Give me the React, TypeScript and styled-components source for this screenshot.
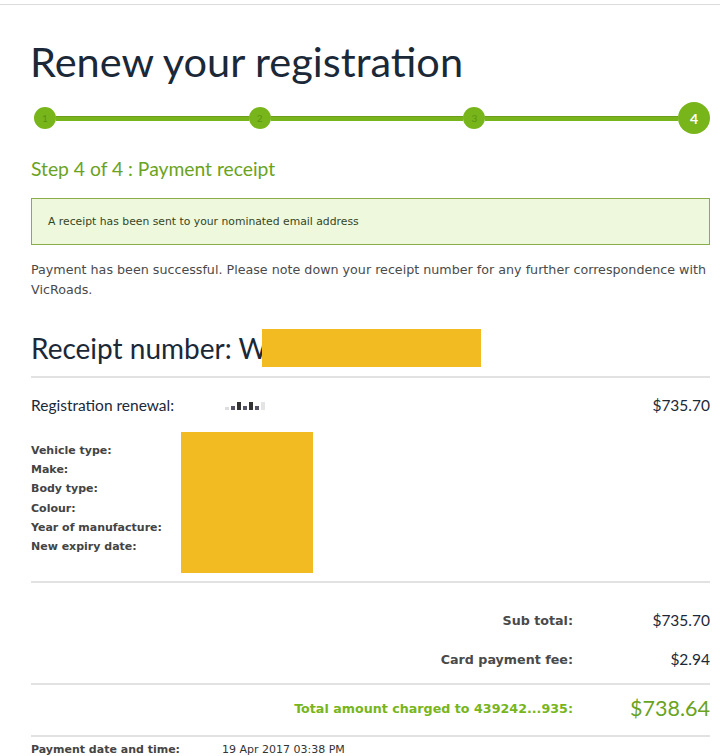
import React from "react";
import styled, { createGlobalStyle } from "styled-components";

const Global = createGlobalStyle`
  html, body { margin: 0; padding: 0; background: #fff; }
  body { font-family: "DejaVu Sans", Verdana, sans-serif; }
`;

const TopRule = styled.div`
  margin-top: 4px;
  height: 1px;
  background: #dcdcdc;
`;

const Page = styled.div`
  padding: 0 10px 0 31px;
`;

const Title = styled.h1`
  margin: 31px 0 0 -1px;
  font-family: "Lato", sans-serif;
  font-weight: 400;
  font-size: 41.5px;
  line-height: 50px;
  color: #1b2838;
`;

const Stepper = styled.div`
  display: flex;
  align-items: center;
  margin: 16px 0 0 3px;
  height: 32px;
`;

const Dot = styled.div<{ $active?: boolean }>`
  flex: none;
  width: ${(p) => (p.$active ? 32 : 22)}px;
  height: ${(p) => (p.$active ? 32 : 22)}px;
  border-radius: 50%;
  background: #78b51b;
  color: ${(p) => (p.$active ? "#fff" : "#5a9410")};
  font-family: "Lato", sans-serif;
  font-size: ${(p) => (p.$active ? 14 : 10)}px;
  font-weight: ${(p) => (p.$active ? 700 : 400)};
  display: flex;
  align-items: center;
  justify-content: center;
`;

const Connector = styled.div`
  flex: 1;
  height: 4px;
  background: #78b51b;
  border-top: 1px solid #6c9e1b;
`;

const StepHeading = styled.h2`
  margin: 23px 0 0 0;
  font-family: "Lato", sans-serif;
  font-weight: 400;
  font-size: 19.3px;
  line-height: 24px;
  color: #6aa31d;
`;

const Notice = styled.div`
  margin-top: 17px;
  height: 45px;
  border: 1px solid #88ad4a;
  background: #eef8dd;
  display: flex;
  align-items: center;
  padding-left: 16px;
  font-size: 10.8px;
  color: #34461f;
`;

const Lead = styled.p`
  margin: 15px 0 0 0;
  font-size: 12.7px;
  line-height: 20px;
  color: #4a4a4a;
`;

const ReceiptRow = styled.div`
  display: flex;
  align-items: center;
  margin-top: 29px;
  height: 38px;
`;

const ReceiptText = styled.span`
  font-family: "Lato", sans-serif;
  font-size: 28px;
  color: #1b2838;
`;

const Redact = styled.div<{ $w: number; $h: number }>`
  flex: none;
  width: ${(p) => p.$w}px;
  height: ${(p) => p.$h}px;
  background: #f2bb22;
`;

const Divider = styled.hr`
  margin: 0;
  border: none;
  border-top: 2px solid #e2e2e2;
`;

const ItemRow = styled.div`
  display: flex;
  align-items: center;
  height: 28px;
  margin-top: 13px;
  font-family: "Lato", sans-serif;
  font-size: 15.5px;
  color: #1b2838;
`;

const ItemLabel = styled.span`
  width: 194px;
`;

const Blur = styled.span`
  flex: 1;
  display: flex;
  gap: 2px;
  align-items: flex-end;
  height: 10px;
`;

const Pix = styled.span<{ $h: number; $c: string }>`
  width: 4px;
  height: ${(p) => p.$h}px;
  background: ${(p) => p.$c};
`;

const Price = styled.span<{ $big?: boolean; $green?: boolean }>`
  font-family: "Lato", sans-serif;
  font-size: ${(p) => (p.$big ? 21.5 : 15.5)}px;
  color: ${(p) => (p.$green ? "#6aa31d" : "#1b2838")};
`;

const Vehicle = styled.div`
  display: grid;
  grid-template-columns: 150px 132px;
  margin-top: 13px;
  margin-bottom: 8px;
`;

const LabelList = styled.div`
  display: flex;
  flex-direction: column;
  padding-top: 9px;
`;

const Label = styled.span`
  font-size: 11px;
  font-weight: 700;
  line-height: 19.2px;
  color: #444;
`;

const Totals = styled.div`
  padding: 18px 0 4px;
`;

const TotalRow = styled.div<{ $h: number; $pb?: number }>`
  display: flex;
  align-items: center;
  justify-content: flex-end;
  box-sizing: border-box;
  height: ${(p) => p.$h}px;
  padding-bottom: ${(p) => p.$pb ?? 0}px;
`;

const TotalLabel = styled.span<{ $green?: boolean }>`
  font-size: 12.7px;
  font-weight: 700;
  color: ${(p) => (p.$green ? "#78b51b" : "#4a4a4a")};
`;

const Amount = styled.span`
  width: 137px;
  text-align: right;
`;

const DateRow = styled.div`
  display: flex;
  align-items: center;
  height: 24px;
  font-size: 11px;
  color: #333;
`;

const DateLabel = styled.span`
  width: 191px;
  font-weight: 700;
  color: #444;
`;

export default function App() {
  return (
    <>
      <Global />
      <TopRule />
      <Page>
        <Title>Renew your registration</Title>
        <Stepper>
          <Dot>1</Dot>
          <Connector />
          <Dot>2</Dot>
          <Connector />
          <Dot>3</Dot>
          <Connector />
          <Dot $active>4</Dot>
        </Stepper>
        <StepHeading>Step 4 of 4 : Payment receipt</StepHeading>
        <Notice>A receipt has been sent to your nominated email address</Notice>
        <Lead>
          Payment has been successful. Please note down your receipt number for any further
          correspondence with VicRoads.
        </Lead>
        <ReceiptRow>
          <ReceiptText>Receipt number: W</ReceiptText>
          <Redact $w={219} $h={38} style={{ marginLeft: -5 }} />
        </ReceiptRow>
        <Divider style={{ marginTop: 9 }} />
        <ItemRow>
          <ItemLabel>Registration renewal:</ItemLabel>
          <Blur>
            <Pix $h={3} $c="#ddd" />
            <Pix $h={4} $c="#556" />
            <Pix $h={8} $c="#333" />
            <Pix $h={4} $c="#556" />
            <Pix $h={8} $c="#333" />
            <Pix $h={4} $c="#556" />
            <Pix $h={8} $c="#e4e4e4" />
          </Blur>
          <Price>$735.70</Price>
        </ItemRow>
        <Vehicle>
          <LabelList>
            <Label>Vehicle type:</Label>
            <Label>Make:</Label>
            <Label>Body type:</Label>
            <Label>Colour:</Label>
            <Label>Year of manufacture:</Label>
            <Label>New expiry date:</Label>
          </LabelList>
          <Redact $w={132} $h={141} />
        </Vehicle>
        <Divider />
        <Totals>
          <TotalRow $h={39}>
            <TotalLabel>Sub total:</TotalLabel>
            <Amount>
              <Price>$735.70</Price>
            </Amount>
          </TotalRow>
          <TotalRow $h={39}>
            <TotalLabel>Card payment fee:</TotalLabel>
            <Amount>
              <Price>$2.94</Price>
            </Amount>
          </TotalRow>
        </Totals>
        <Divider />
        <TotalRow $h={50} $pb={4}>
          <TotalLabel $green>Total amount charged to 439242...935:</TotalLabel>
          <Amount>
            <Price $big $green>$738.64</Price>
          </Amount>
        </TotalRow>
        <Divider />
        <DateRow>
          <DateLabel>Payment date and time:</DateLabel>
          <span>19 Apr 2017 03:38 PM</span>
        </DateRow>
      </Page>
    </>
  );
}
